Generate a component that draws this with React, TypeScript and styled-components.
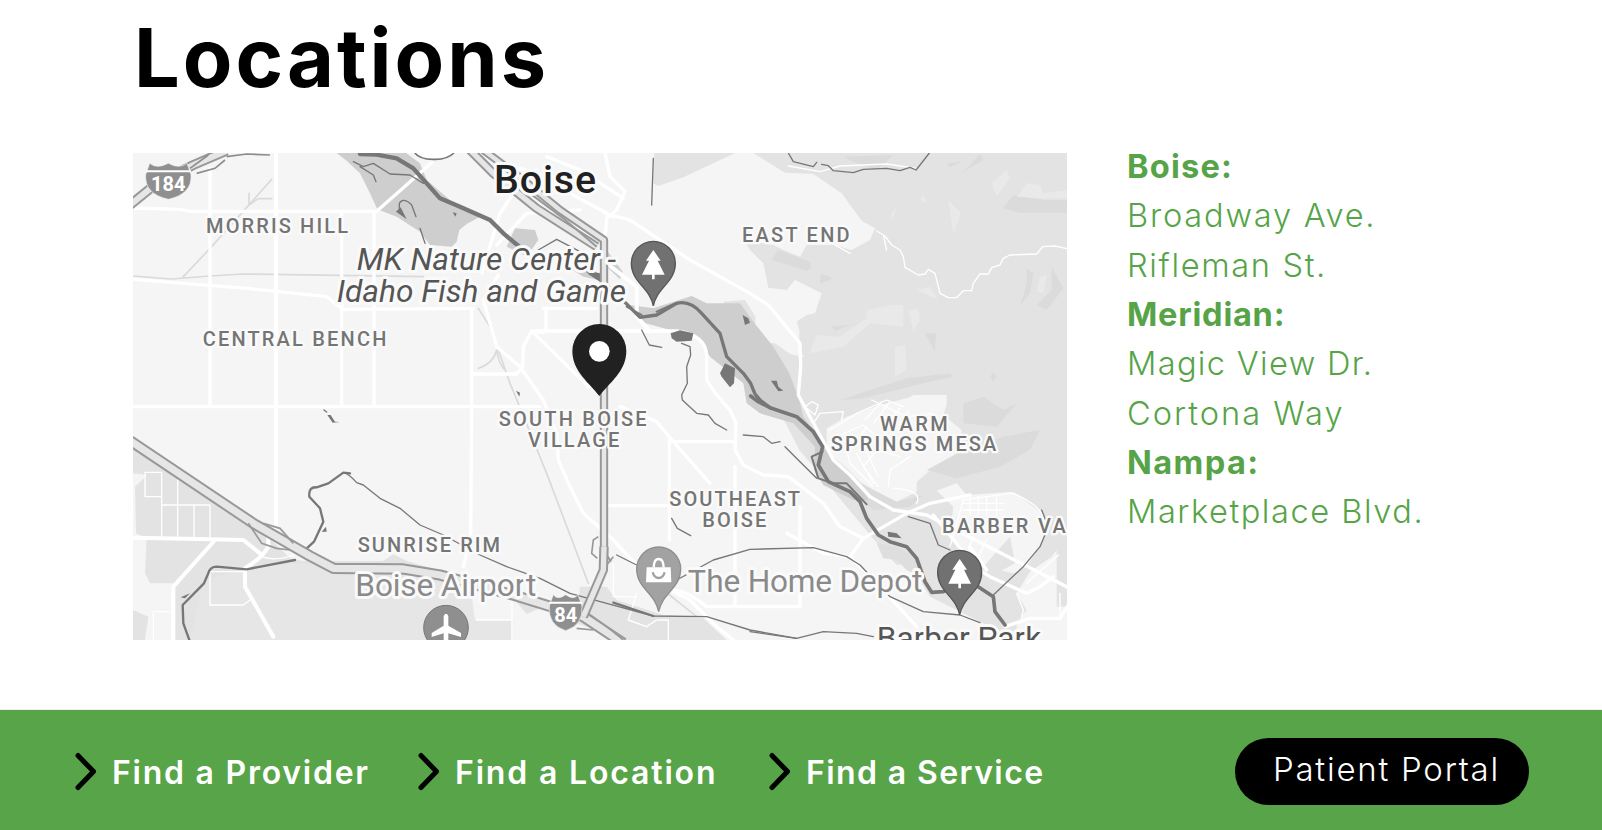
import React from "react";
import styled, { createGlobalStyle } from "styled-components";

const GlobalStyle = createGlobalStyle`
  *, *::before, *::after { box-sizing: border-box; }
  body { margin: 0; background: #fff; font-family: Inter, "Liberation Sans", sans-serif; }
`;

const Page = styled.div`
  width: 1602px;
  height: 830px;
  overflow: hidden;
  display: flex;
  flex-direction: column;
  background: #fff;
`;

const Content = styled.main`
  flex: 1;
  padding: 13px 0 0 133px;
`;

const Heading = styled.h1`
  margin: 0 0 0 1px;
  font-size: 81px;
  line-height: 90px;
  font-weight: 700;
  letter-spacing: 3px;
  color: #000;
`;

const Columns = styled.div`
  display: flex;
  align-items: flex-start;
  gap: 60px;
  padding-top: 50px;
`;

const MapFrame = styled.svg`
  display: block;
  flex: none;
  width: 934px;
  height: 487px;
  background: #f5f5f5;
`;

const Addresses = styled.div`
  display: flex;
  flex-direction: column;
  margin-top: -11px;
  color: #56a447;
  font-size: 32.6px;
  line-height: 49.33px;
`;

const City = styled.strong<{ $track: number }>`
  font-weight: 700;
  white-space: nowrap;
  letter-spacing: ${(p) => p.$track}px;
`;

const Street = styled.a<{ $track: number }>`
  font-weight: 300;
  white-space: nowrap;
  letter-spacing: ${(p) => p.$track}px;
`;

const Footer = styled.footer`
  flex: none;
  height: 121px;
  border-top: 1px solid #e9f3e7;
  background: #58a449;
  display: flex;
  align-items: flex-start;
  justify-content: space-between;
  padding: 28px 73px 0 74px;
`;

const Links = styled.nav`
  display: flex;
  padding-top: 14px;
`;

const NavLink = styled.a<{ $width: number; $track: number }>`
  display: flex;
  gap: 14px;
  width: ${(p) => p.$width}px;
  color: #fff;
  font-size: 32px;
  line-height: 42px;
  font-weight: 600;
  letter-spacing: ${(p) => p.$track}px;
  white-space: nowrap;
`;

const Chevron = styled.svg`
  flex: none;
  width: 24px;
  height: 40px;
`;

const Portal = styled.a`
  width: 294px;
  height: 67px;
  border-radius: 34px;
  background: #000;
  color: #fff;
  font-size: 33px;
  font-weight: 300;
  line-height: 63px;
  padding-left: 38px;
  letter-spacing: 1.75px;
  white-space: nowrap;
`;

type LabelProps = {
  x: number;
  y: number;
  w: number;
  size?: number;
  weight?: number;
  fill?: string;
  italic?: boolean;
  halo?: number;
  children: string;
};

const Label = ({ x, y, w, size = 60, weight = 500, fill = "#757575", italic, halo = 14, children }: LabelProps) => (
  <text
    x={x}
    y={y}
    textLength={w}
    fontFamily="Roboto, sans-serif"
    fontSize={size}
    fontWeight={weight}
    fontStyle={italic ? "italic" : "normal"}
    fill={fill}
    stroke="#fafafa"
    strokeWidth={halo}
    strokeLinejoin="round"
    paintOrder="stroke"
  >
    {children}
  </text>
);

const Highway = ({ d, w = 34 }: { d: string; w?: number }) => (
  <g fill="none" strokeLinejoin="round">
    <path d={d} stroke="#989898" strokeWidth={w} />
    <path d={d} stroke="#e6e6e6" strokeWidth={w - 12} />
  </g>
);

const Drop = ({ fill, edge }: { fill: string; edge: string }) => (
  <path
    d="M0 128C-10 72-66 58-66 0A66 66 0 0 1 66 0C66 58 10 72 0 128Z"
    fill={fill}
    stroke={edge}
    strokeWidth="4"
  />
);

const TreePin = ({ x, y }: { x: number; y: number }) => (
  <g transform={`translate(${x} ${y})`}>
    <Drop fill="#717171" edge="#555" />
    <path d="M0-40L22-8H13L34 34H4V48H-4V34H-34L-13-8H-22Z" fill="#fff" />
  </g>
);

const Shield = ({ x, y, w, label }: { x: number; y: number; w: number; label: string }) => (
  <g transform={`translate(${x} ${y})`}>
    <path
      d={`M${-w + 12}-54Q${-w / 2}-36 0-54Q${w / 2}-36 ${w - 12}-54L${w}-20Q${w + 4} 38 0 54Q${-w - 4} 38 ${-w}-20Z`}
      fill="#8f8f8f"
      stroke="#f2f2f2"
      strokeWidth="2"
    />
    <path d={`M${-w}-30H${w}`} stroke="#fff" strokeWidth="6" />
    <text
      y="29"
      textAnchor="middle"
      fontFamily="Roboto, sans-serif"
      fontWeight="700"
      fontSize="60"
      fill="#fff"
    >
      {label}
    </text>
  </g>
);

const Terrain = () => (
  <g>
    <path
      fill="#e3e3e3"
      d="M1870 9L1965 68 2050 72 2135 130 2195 212 2235 235 2220 270 2165 300 2110 285 2030 285 2010 320 1960 300 1930 285 1840 270 1860 300 1900 340 1915 413 1970 420 1995 390 2075 430 2055 490 2030 495 2000 515 2008 540 2008 600 2023 622 1980 612 1935 580 1900 578 1876 550 1876 500 1845 450 1780 455 2008 900 2150 1070 2250 1190 2300 1245 2340 1240 2400 1340 2560 1420 2640 1470 2812 1470V9Z"
    />
    <path fill="#e3e3e3" d="M1573 9H1816L1660 82 1585 108 1570 100Z" />
    <path
      fill="#f5f5f5"
      d="M2090 835L2150 800 2250 765 2340 742 2350 735 2450 735 2450 765 2440 795 2495 840 2480 925 2420 945 2360 995 2360 1025 2300 1055 2240 1025 2190 995 2150 955 2090 905Z"
    />
    <path fill="#f5f5f5" d="M2420 1022L2480 1000 2510 1035 2650 1025 2730 1085 2755 1130 2735 1180 2690 1250 2650 1270 2540 1245 2480 1190 2460 1145 2470 1070Z" />
    <path fill="#f5f5f5" d="M2700 1265L2765 1220 2780 1200 2780 1370 2812 1370V1470H2660V1420L2690 1380 2660 1330Z" />
    <path fill="#e3e3e3" d="M2640 1160L2655 1240 2600 1270 2560 1250Z" />
    <g fill="#dbdbdb">
      <path d="M1945 300L2040 335 2045 352 2030 362 1925 330ZM2072 372L2112 383 2070 402ZM2618 175L2650 135 2740 150H2812V188H2670ZM2690 355L2710 370 2700 430 2672 465 2690 400ZM2765 350L2800 415 2750 480 2720 465 2765 420ZM2385 550H2418L2415 605ZM2220 720L2330 685 2460 670 2470 680 2380 700 2200 745 2130 750Z" />
      <path d="M2590 665L2600 680 2590 693 2580 680ZM2450 40L2492 36 2460 52ZM2105 528L2160 525 2115 543ZM2500 760L2560 740 2620 780 2660 760 2600 830 2500 820ZM2390 960L2500 900 2620 860 2730 840 2700 900 2610 950 2480 985Z" />
      <path d="M2130 980L2190 1000 2300 1055 2380 1035 2340 1070 2230 1080 2170 1030ZM2140 20L2290 15 2240 60 2180 40ZM2500 65L2550 12 2560 30Z" />
    </g>
    <g fill="#e9e9e9">
      <path d="M2585 100L2630 60 2640 85 2600 140ZM2660 140L2690 100 2730 105 2740 130 2812 120V145H2740ZM2455 150L2493 190 2470 253ZM2280 195L2300 170 2290 205ZM2380 135L2390 160 2370 150ZM2045 590L2060 555 2130 560 2210 505 2210 480 2290 465 2320 465 2320 530 2220 520 2140 590 2040 610ZM2335 480L2365 475 2370 510 2350 543ZM2295 590L2325 585 2330 660 2295 680ZM2730 380L2750 375 2740 430 2720 425ZM2360 420L2400 410 2425 450Z" />
    </g>
    <path fill="#e3e3e3" d="M9 895L130 975 370 1115 480 1225 520 1233 830 1233 960 1270 1240 1350 1480 1470H9Z" />
    <path fill="#e6e6e6" d="M420 1240H820L1010 1290 1200 1350 1280 1470H180L220 1290Z" />
    <path fill="#f5f5f5" d="M9 970L52 975 15 1010 18 1150 50 1165 45 1270 60 1300 130 1300 125 1400 130 1470H45L55 1400 9 1380Z" />
    <path fill="#f5f5f5" d="M9 1310L25 1320V1360L9 1370ZM1020 1300L1150 1345V1410H1035ZM1148 1350L1260 1385 1480 1470H1148Z" />
    <path fill="#e3e3e3" d="M1350 1310L1430 1310 1460 1350 1600 1395 1720 1405 1790 1470H1480L1340 1420ZM755 1235L790 1213 830 1233ZM1150 1345L1240 1370 1190 1392Z" />
    <g fill="#cecece">
      <path d="M620 9H828L870 40 890 90 960 150 1050 200 1010 222 988 240 980 275 965 290 900 285 870 245 800 200 742 178 720 130 690 70 650 32Z" />
      <path d="M1155 235L1215 240 1225 270 1190 320 1130 290ZM1430 300L1478 365 1470 388 1430 350ZM1280 330L1400 365 1405 390 1360 380Z" />
      <path d="M1500 465L1570 475 1685 438 1730 460 1830 460 1870 515 1930 590 1978 670 2008 750 2020 800 2090 895 2120 935 2190 1005 2215 1050 2170 1050 2080 1005 2052 960 2055 890 1990 820 1890 790 1850 760 1840 700 1740 620 1700 560 1640 545 1530 515Z" />
      <path fill="#dedede" d="M2240 1180L2300 1190 2370 1230 2385 1290 2330 1260 2300 1230 2260 1225Z" />
    </g>
  </g>
);

const Roads = () => (
  <g fill="none" stroke="#fff" strokeLinejoin="round" strokeLinecap="round">
    <g stroke="#dadada" strokeWidth="5">
      <path d="M9 378L125 387 240 378 340 372 880 380M160 380L245 290 425 88M357 130V165L385 146H425M1045 475L1080 530 1105 600 1140 700 1160 748 1250 970 1375 1300M1045 655Q1090 640 1100 600Q1105 640 1125 660M1600 1320L1700 1400" />
    </g>
    <g strokeWidth="10">
      <path d="M240 55V770M635 190V770M732 190V770M9 174L150 178 180 184 740 184 905 38M9 388L350 415 590 440 640 478 1030 475M9 770H1230M1240 548L1210 543H1640Q1730 555 1730 620V690Q1760 740 1800 780L1818 820 1815 900 1840 945 1900 975 1975 980 2080 1060 2130 1130 2200 1165 2330 1090 2400 1060 2520 1035" />
      <path d="M1025 475V790L1022 1160 1000 1250M1030 672H1160L1178 650 1180 590 1205 543 1375 710 1400 720M1248 475V540M1105 375L1060 450 1100 590 1170 650 1240 750 1280 850 1285 930 1320 1010 1360 1090 1450 1170 1560 1290 1680 1350 1760 1430 1810 1470" />
      <path d="M1240 475H1400M1430 1067H1620M1618 870V1170M1618 875H1815M1470 770L1580 815 1630 875 1740 1000M1815 950V1370M2010 1070V1150V1370H1730Q1670 1320 1620 1320M1970 1150L2080 1210 2160 1220 2200 1165M2160 1220L2250 1310 2360 1430" />
      <path d="M1425 9L1440 80 1485 125 1460 180 1430 205 1425 270M1250 20L1350 60 1480 145M1235 95L1320 130 1450 200M1055 370L1110 190 1150 130 1220 60M1100 285L1190 190 1350 180M1425 190L1500 210 1680 330 1860 430 1915 465 2010 580 2012 650 2005 735 2110 930 2160 975 2220 1040 2290 1080 2390 1095 2810 1310" />
      <path d="M1430 340L1520 410 1520 500 1560 543M1230 75L1150 50" strokeWidth="12" />
      <path d="M2410 1095L2540 1255 2580 1280 2690 1330 2730 1310 2770 1280M2625 1430L2700 1405 2790 1405 2812 1370M2520 1190L2570 1260" />
    </g>
    <path d="M438 9V1130" strokeWidth="13" />
    <path d="M9 1163L240 1168 340 1170 390 1210M415 1190Q395 1225 345 1255V1310L430 1460M255 1170L130 1310V1470M415 1155L415 1190" strokeWidth="12" />
    <g strokeWidth="4">
      <path d="M45 967H95V1160M45 967V1040H95M95 1065H240V1160M143 990V1160M192 1068V1160M240 1265V1365H340L360 1350M240 1265H345M70 1470V1385H120M395 1220Q440 1235 490 1215M1450 1240V1340H1520M1520 1330L1495 1410 1550 1430 1580 1410H1615V1470M1146 1290V1470M1040 1410H1146" />
      <path d="M2240 243L2265 258 2285 285 2310 300 2320 320 2325 352 2365 375 2385 372 2395 358 2415 370 2430 430 2455 443H2480L2500 422H2525L2530 400 2550 372H2575L2585 353 2610 345 2620 325 2640 315 2720 312 2738 290 2775 288 2812 296M2260 255L2270 300M2115 285L2160 310M1975 48L2070 65 2130 48 2270 42 2360 55" />
      <path d="M2050 820L2070 790 2140 785 2135 810M2100 840L2180 790 2270 750 2320 770M2120 860L2200 825 2240 860M2230 1010L2160 940 2150 900 2190 860 2210 830M2245 1010L2200 950 2240 900 2310 920M2275 1010L2280 960 2340 920M2225 750L2330 800 2410 790M2290 1015Q2380 1020 2360 1060M2460 1190L2500 1050 2640 1030 2650 1030Q2740 1070 2740 1110M2500 1060H2620M2500 1080H2620M2520 1040V1095M2545 1040V1095M2570 1040V1095M2600 1040V1095M2500 1200L2490 1250M2530 1160L2500 1240M2570 1170L2530 1250M2660 1330L2680 1380 2675 1400M2785 1215L2690 1300M2790 1330V1400" />
      <path d="M2025 770L2045 755 2065 765 2055 795ZM2255 755L2205 810M2280 755L2230 820M2310 775L2265 820M2335 785L2305 825M2180 910L2230 1000M2210 905L2245 980" />
    </g>
  </g>
);

const Water = () => (
  <g fill="none" stroke="#777" strokeLinejoin="round" strokeLinecap="round">
    <path d="M690 12L740 14 800 25 850 55 890 100 930 145 990 170 1080 210 1120 250 1180 300" strokeWidth="13" />
    <path
      d="M1380 370L1420 395 1480 452 1530 502 1580 495 1640 460Q1680 450 1715 490L1770 550 1790 620 1840 670 1862 700 1875 732 1892 752 1920 773"
      strokeWidth="10"
    />
    <path
      d="M1862 738L1885 755 1920 773 2000 800 2050 845 2078 890 2065 945 2095 995 2160 1025 2190 1055 2210 1105 2245 1155 2280 1175 2330 1190 2360 1225 2385 1295 2405 1327 2440 1325 2480 1305 2540 1307 2590 1340 2595 1385 2625 1425"
      strokeWidth="11"
    />
    <path d="M1535 495L1490 470M2078 905L2045 920 2065 985 2110 1000 2150 1000 2210 1063M1640 458L1580 485" strokeWidth="6" />
    <g fill="#777" stroke="none">
      <path d="M1622 550L1650 541 1690 550 1685 572 1640 575 1625 565ZM1785 640L1815 655 1812 700 1800 712 1775 680 1770 670ZM1838 495L1855 505 1860 518 1845 525ZM1923 692L1940 692 1945 710 1960 722 1945 724ZM2273 1145L2300 1150 2315 1165 2275 1160ZM798 185L812 172 830 208ZM1360 360L1410 370V395ZM575 1145L588 1130 590 1145ZM152 1342L180 1330 165 1345ZM968 187L980 190 976 200ZM1158 722L1170 728 1168 740ZM592 795L602 795 615 815 630 816 608 818Z" />
    </g>
    <g strokeWidth="4">
      <path d="M670 35L700 50 730 40 780 72 840 75 880 100M690 50L730 75 738 95M808 185V160Q820 140 845 165L858 200M870 235L885 280M1570 25L1565 165M1535 540L1558 585 1595 592M1655 580L1680 590 1682 615 1670 650 1672 700 1655 735 1657 750 1700 790 1735 795 1755 820 1790 840M1840 855L1900 860 1925 880 1950 875M1965 890L2010 935 2060 985" />
      <path d="M1975 9L1990 35 2050 50 2060 37M2075 43L2095 47 2110 62 2170 68 2200 58 2270 55 2310 62 2340 52 2358 60 2370 45 2398 9M582 780L590 786M640 968Q655 970 680 998L700 1005 750 1045 810 1075 870 1125 940 1155 1050 1215 1130 1250 1230 1285 1320 1330 1430 1360 1570 1398 1730 1400 1860 1440 2000 1465" />
      <path d="M1625 1105L1642 1135 1682 1157M1460 1215L1520 1245 1560 1260M1640 1290L1750 1230 1860 1198 2050 1193 2150 1220 2190 1245 2280 1340 2380 1385 2490 1395 2550 1418M2335 1100L2400 1120 2425 1185 2460 1200M2590 1335L2680 1250 2730 1190 2755 1130 2735 1080M1860 1445L2000 1465 2080 1445 2180 1450 2230 1460M1225 300L1280 268 1360 310" />
    </g>
    <g strokeWidth="7">
      <path d="M523 1202L552 1175 580 1115 570 1075 538 1040Q535 1010 560 1012L595 1000 640 968 660 970M495 1230L350 1258 260 1250Q240 1250 235 1270L222 1300 158 1365 160 1420 178 1470M1450 1358L1570 1398" />
    </g>
  </g>
);

const Highways = () => (
  <g>
    <Highway d="M-10 173L80 100 190 45 290 2" w={30} />
    <g fill="none" stroke="#8d8d8d" strokeWidth="5">
      <path d="M180 55L235 15M200 70L255 55 285 30M290 20L350 12 420 15M1415 330V520" />
    </g>
    <Highway d="M1020 0L1090 70 1220 175 1400 290" w={28} />
    <Highway d="M1060 0L1180 90 1290 180 1422 270V1220L1435 1240" w={25} />
    <path d="M1180 115L1300 205 1400 290" stroke="#999" strokeWidth="6" fill="none" />
    <Highway d="M0 872L370 1120 540 1218 610 1255 820 1257 930 1275 1150 1335 1360 1400 1480 1480" />
    <Highway d="M1422 1190L1420 1260 1360 1400" w={28} />
    <g fill="none" stroke="#999" strokeWidth="5">
      <path d="M355 1120L395 1180 440 1195 480 1200M400 1120L450 1135 490 1180M1402 1225L1385 1210 1390 1170 1405 1160M1430 1245L1450 1220M1340 1435L1390 1440M1375 1390L1430 1430 1480 1470" />
    </g>
    <path d="M850 0Q860 28 910 28Q950 30 972 9" fill="#fff" stroke="#777" strokeWidth="5" />
  </g>
);

const AreaMap = () => (
  <MapFrame viewBox="9 9 2802 1461" preserveAspectRatio="none">
    <Terrain />
    <Roads />
    <Water />
    <Highways />

    <Shield x={115} y={94} w={68} label="184" />
    <Shield x={1307} y={1388} w={49} label="84" />

    <Label x={228} y={248} w={426}>MORRIS HILL</Label>
    <Label x={218} y={588} w={551}>CENTRAL BENCH</Label>
    <Label x={1836} y={275} w={323}>EAST END</Label>
    <Label x={1106} y={829} w={444}>SOUTH BOISE</Label>
    <Label x={1194} y={891} w={274}>VILLAGE</Label>
    <Label x={683} y={1205} w={427}>SUNRISE RIM</Label>
    <Label x={1618} y={1069} w={392}>SOUTHEAST</Label>
    <Label x={1717} y={1130} w={192}>BOISE</Label>
    <Label x={2250} y={843} w={203}>WARM</Label>
    <Label x={2102} y={904} w={497}>SPRINGS MESA</Label>
    <Label x={2436} y={1150} w={371}>BARBER VA</Label>
    <Label x={1092} y={130} w={306} size={118} fill="#212121" halo={18}>Boise</Label>
    <Label x={680} y={360} w={778} size={95} weight={400} fill="#555" italic halo={18}>MK Nature Center -</Label>
    <Label x={620} y={455} w={868} size={95} weight={400} fill="#555" italic halo={18}>Idaho Fish and Game</Label>
    <Label x={676} y={1337} w={543} size={95} weight={400} fill="#8a8a8a" halo={18}>Boise Airport</Label>
    <Label x={1673} y={1325} w={704} size={95} weight={400} fill="#8a8a8a" halo={18}>The Home Depot</Label>
    <Label x={2240} y={1498} w={494} size={95} weight={400} fill="#555" halo={18}>Barber Park</Label>

    <TreePin x={1570} y={340} />
    <TreePin x={2489} y={1267} />

    <g transform="translate(1586 1257)">
      <Drop fill="#a2a2a2" edge="#8f8f8f" />
      <path d="M-36-5H36L38 40H-38Z" fill="#fff" />
      <path d="M-15-5Q-14-30 0-30Q14-30 15-5" fill="none" stroke="#fff" strokeWidth="7" />
      <path d="M-18 10Q-14 27 0 27Q14 27 18 10" fill="none" stroke="#a2a2a2" strokeWidth="7" />
    </g>

    <g transform="translate(948 1433)">
      <circle r="67" fill="#8f8f8f" stroke="#777" strokeWidth="3" />
      <path d="M-7-35Q0-48 7-35V-6L45 16V28L7 17V38H-7V17L-43 28V16L-7-6Z" fill="#fff" />
    </g>

    <path
      d="M1408 738C1380 700 1327 665 1327 603A81 81 0 0 1 1489 603C1489 665 1436 700 1408 738Z"
      fill="#212121"
    />
    <circle cx="1408" cy="604" r="31" fill="#fff" />
  </MapFrame>
);

const ChevronIcon = () => (
  <Chevron viewBox="0 0 24 40" fill="none">
    <path d="M4 3.5L19.5 19.5L4 35.5" stroke="#000" strokeWidth="5" strokeLinecap="round" strokeLinejoin="round" />
  </Chevron>
);

const links = [
  { text: "Find a Provider", width: 343, track: 1.75 },
  { text: "Find a Location", width: 351, track: 1.83 },
  { text: "Find a Service", width: 290, track: 1.4 },
];

const cities = [
  {
    name: "Boise:",
    track: 1.2,
    streets: [
      { name: "Broadway Ave.", track: 1.8 },
      { name: "Rifleman St.", track: 1.65 },
    ],
  },
  {
    name: "Meridian:",
    track: 0.75,
    streets: [
      { name: "Magic View Dr.", track: 1.33 },
      { name: "Cortona Way", track: 2 },
    ],
  },
  { name: "Nampa:", track: 1.4, streets: [{ name: "Marketplace Blvd.", track: 1.55 }] },
];

export default function App() {
  return (
    <>
      <GlobalStyle />
      <Page>
        <Content>
          <Heading>Locations</Heading>
          <Columns>
            <AreaMap />
            <Addresses>
              {cities.map((c) => (
                <React.Fragment key={c.name}>
                  <City $track={c.track}>{c.name}</City>
                  {c.streets.map((s) => (
                    <Street key={s.name} $track={s.track}>{s.name}</Street>
                  ))}
                </React.Fragment>
              ))}
            </Addresses>
          </Columns>
        </Content>
        <Footer>
          <Links>
            {links.map((l) => (
              <NavLink key={l.text} $width={l.width} $track={l.track}>
                <ChevronIcon />
                {l.text}
              </NavLink>
            ))}
          </Links>
          <Portal>Patient Portal</Portal>
        </Footer>
      </Page>
    </>
  );
}
